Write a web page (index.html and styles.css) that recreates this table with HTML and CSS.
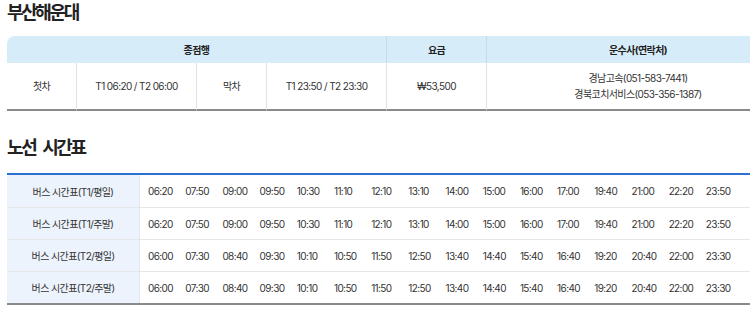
FILE: index.html
```html
<!DOCTYPE html>
<html lang="ko">
<head>
<meta charset="utf-8">
<link rel="stylesheet" href="styles.css">
</head>
<body>
<div class="page">
  <h2 class="title">부산해운대</h2>
  <table class="info">
    <colgroup>
      <col class="w1"><col class="w2"><col class="w3"><col class="w4"><col class="w5"><col>
    </colgroup>
    <thead>
      <tr>
        <th colspan="4" class="h-first">종점행</th>
        <th>요금</th>
        <th class="h-last">운수사(연락처)</th>
      </tr>
    </thead>
    <tbody>
      <tr>
        <td class="c1">첫차</td>
        <td>T1 06:20 / T2 06:00</td>
        <td>막차</td>
        <td>T1 23:50 / T2 23:30</td>
        <td>₩53,500</td>
        <td>경남고속(051-583-7441)<br>경북코치서비스(053-356-1387)</td>
      </tr>
    </tbody>
  </table>

  <h2 class="title title2">노선 시간표</h2>
  <div class="sched">
    <div class="row">
      <div class="label">버스 시간표(T1/평일)</div>
      <div class="times"><span>06:20</span><span>07:50</span><span>09:00</span><span>09:50</span><span>10:30</span><span>11:10</span><span>12:10</span><span>13:10</span><span>14:00</span><span>15:00</span><span>16:00</span><span>17:00</span><span>19:40</span><span>21:00</span><span>22:20</span><span>23:50</span></div>
    </div>
    <div class="row">
      <div class="label">버스 시간표(T1/주말)</div>
      <div class="times"><span>06:20</span><span>07:50</span><span>09:00</span><span>09:50</span><span>10:30</span><span>11:10</span><span>12:10</span><span>13:10</span><span>14:00</span><span>15:00</span><span>16:00</span><span>17:00</span><span>19:40</span><span>21:00</span><span>22:20</span><span>23:50</span></div>
    </div>
    <div class="row">
      <div class="label">버스 시간표(T2/평일)</div>
      <div class="times"><span>06:00</span><span>07:30</span><span>08:40</span><span>09:30</span><span>10:10</span><span>10:50</span><span>11:50</span><span>12:50</span><span>13:40</span><span>14:40</span><span>15:40</span><span>16:40</span><span>19:20</span><span>20:40</span><span>22:00</span><span>23:30</span></div>
    </div>
    <div class="row">
      <div class="label">버스 시간표(T2/주말)</div>
      <div class="times"><span>06:00</span><span>07:30</span><span>08:40</span><span>09:30</span><span>10:10</span><span>10:50</span><span>11:50</span><span>12:50</span><span>13:40</span><span>14:40</span><span>15:40</span><span>16:40</span><span>19:20</span><span>20:40</span><span>22:00</span><span>23:30</span></div>
    </div>
  </div>
</div>
</body>
</html>
```

FILE: styles.css
```css
html, body {
  margin: 0;
  padding: 0;
  background: #fff;
  overflow: hidden;
}
body {
  font-family: Inter, "Noto Sans CJK KR", sans-serif;
  color: #333;
  font-size: 10px;
  letter-spacing: -0.6px;
}
.page {
  width: 782px;
  padding: 0 0 0 7px;
}
.title {
  margin: 0;
  padding-top: 2px;
  height: 34px;
  font-size: 18px;
  font-weight: 700;
  color: #222;
  letter-spacing: -2.4px;
  word-spacing: 5px;
  line-height: 22px;
}
.title2 {
  margin-top: 24px;
  height: 36px;
}
.info {
  width: 782px;
  border-collapse: separate;
  border-spacing: 0;
  table-layout: fixed;
}
.info .w1 { width: 69px; }
.info .w2 { width: 120px; }
.info .w3 { width: 70px; }
.info .w4 { width: 120px; }
.info .w5 { width: 100px; }
.info th {
  background: #d6ecf9;
  height: 27px;
  padding: 0;
  font-weight: 700;
  color: #222;
  border-left: 1px solid #c5dbe8;
}
.info th.h-first {
  border-left: none;
  border-top-left-radius: 8px;
}
.info th.h-last { border-top-right-radius: 8px; }
.info td {
  height: 46px;
  padding: 0;
  text-align: center;
  border-left: 1px solid #e2e2e2;
  border-bottom: 2px solid #8a8a8a;
  line-height: 16px;
}
.info td.c1 { border-left: none; }

.sched {
  width: 782px;
  border-top: 2px solid #2c6fd5;
  border-bottom: 2px solid #8a8a8a;
}
.row {
  display: flex;
  height: 31px;
  border-top: 1px solid #e6e6e6;
}
.row:first-child { border-top: none; height: 32px; }
.label {
  width: 132px;
  flex: none;
  background: #edf3fc;
  border-right: 1px solid #e2e8f0;
  display: flex;
  align-items: center;
  justify-content: center;
}
.times {
  display: flex;
  align-items: center;
  padding-left: 8px;
}
.times span {
  width: 37.2px;
  flex: none;
}
```
